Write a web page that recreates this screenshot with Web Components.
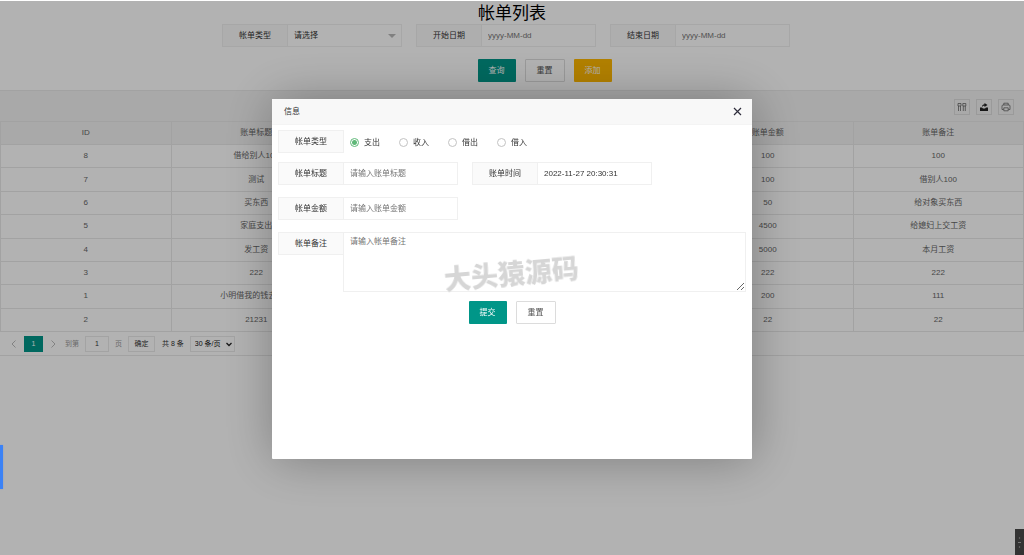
<!DOCTYPE html>
<html lang="zh">
<head>
<meta charset="utf-8">
<title>帐单列表</title>
<style>
html,body{margin:0;background:#fff;color:#333;font:8px/12px "Liberation Sans","Noto Sans CJK SC",sans-serif}
</style>
</head>
<body>
<bill-page></bill-page>
<modal-layer heading="信息"><bill-form></bill-form></modal-layer>
<side-handle></side-handle>
<corner-tool></corner-tool>
<script>
const base = `*{box-sizing:border-box}button,input,select,textarea{font:inherit;color:inherit;margin:0;border-radius:0}`;
function define(name, html) {
  customElements.define(name, class extends HTMLElement {
    connectedCallback() {
      if (this.shadowRoot) return;
      const root = this.attachShadow({mode: 'open'});
      root.innerHTML = typeof html === 'function' ? html(this) : html;
    }
  });
}

/* Label box joined to a text box, a drop-down or a text area */
define('form-field', el => {
  const kind = el.getAttribute('kind') || 'text';
  const hint = el.getAttribute('hint') || '';
  const control = {
    text: `<input id="c" type="text" placeholder="${hint}" value="${el.getAttribute('value') || ''}">`,
    select: `<select id="c"><option>${hint}</option></select><svg width="8" height="4" viewBox="0 0 8 4"><path d="M0 0h8L4 4z" fill="#b8b8b8"/></svg>`,
    area: `<textarea id="c" placeholder="${hint}"></textarea>`
  }[kind];
  return `<style>${base}
  :host{display:flex;width:180px;align-items:flex-start}
  :host([kind=area]){width:auto}
  label{flex:0 0 66px;height:23px;line-height:21px;text-align:center;border:1px solid #f0f0f0;background:#fafafa}
  .box{flex:1;display:flex;position:relative;margin-left:-1px}
  input,select,textarea{width:100%;height:23px;border:1px solid #f0f0f0;background:#fff;padding:0 6px;outline:0;appearance:none}
  textarea{height:60px;padding:3px 6px;resize:both;display:block}
  ::placeholder{color:#757575;opacity:1}
  svg{position:absolute;right:6px;top:10px;pointer-events:none}
  </style><label for="c">${el.getAttribute('label')}</label><div class="box">${control}</div>`;
});

define('ui-button', `<style>${base}
  :host{display:block}
  button{display:block;height:23px;padding:0 11px;border:0;border-radius:1px;background:#009688;color:#fff;line-height:21px}
  :host([tone=plain]) button{background:#fff;color:#555;border:1px solid #dcdcdc}
  :host([tone=warm]) button{background:#ffb800}
  </style><button type="button"><slot></slot></button>`);

define('search-bar', `<style>${base}
  :host{display:block}
  .fields{display:flex;justify-content:center;gap:14px;padding-right:12px}
  .actions{display:flex;justify-content:center;gap:9px;margin:12px 0 0 65px}
  </style>
  <div class="fields">
    <form-field kind="select" label="帐单类型" hint="请选择"></form-field>
    <form-field label="开始日期" hint="yyyy-MM-dd"></form-field>
    <form-field label="结束日期" hint="yyyy-MM-dd"></form-field>
  </div>
  <div class="actions"><ui-button>查询</ui-button><ui-button tone="plain">重置</ui-button><ui-button tone="warm">添加</ui-button></div>`);

define('table-tools', `<style>${base}
  :host{display:flex;justify-content:flex-end;align-items:center;gap:6px;height:31px;padding:2px 10px 0;background:#f2f2f2;border-top:1px solid #e8e8e8}
  button{width:16px;height:16px;padding:0;border:1px solid #ddd;background:none;display:grid;place-items:center;color:#555}
  svg{width:10px;height:10px;fill:none;stroke:currentColor}
  </style>
  <button aria-label="筛选列"><svg viewBox="0 0 10 10"><path d="M1 1.500h3v2.500H1zM5.800 1.500h3v2.500h-3zM1.500 4v5M3.500 4v5M6.300 4v5M8.300 4v5" stroke-width=".7"/></svg></button>
  <button aria-label="导出"><svg viewBox="0 0 10 10"><path d="M1 5.500h2L4 6.500h2l1-1h2V9H1z" fill="#222" stroke="none"/><path d="M3 5c0-2 1-2.800 2.500-2.800V1L8.500 3 5.500 5V3.800C4.200 3.800 3.800 4.200 3 5z" fill="#222" stroke="none"/></svg></button>
  <button aria-label="打印"><svg viewBox="0 0 10 10"><path d="M2.800 3V1.200h4.400V3M2.500 7.500H1V4q0-1 1-1h6q1 0 1 1v3.500H7.500M2.800 5.800h4.400v3H2.800z" stroke-width=".7"/></svg></button>`);

const rows = [
  ['8', '借给别人100', '100', '100'],
  ['7', '测试', '100', '借别人100'],
  ['6', '买东西', '50', '给对象买东西'],
  ['5', '家庭支出', '4500', '给媳妇上交工资'],
  ['4', '发工资', '5000', '本月工资'],
  ['3', '222', '222', '222'],
  ['1', '小明借我的钱去买菜', '200', '111'],
  ['2', '21231', '22', '22']
];
define('bill-table', `<style>${base}
  :host{display:block}
  table{width:100%;height:211px;table-layout:fixed;border-collapse:collapse;color:#666}
  th,td{height:23px;padding:0;text-align:center;font-weight:400;border:1px solid #e8e8e8}
  th{background:#f2f2f2}
  </style>
  <table><thead><tr><th>ID</th><th>账单标题</th><th></th><th></th><th>账单金额</th><th>账单备注</th></tr></thead>
  <tbody>${rows.map(r => `<tr><td>${r[0]}</td><td>${r[1]}</td><td></td><td></td><td>${r[2]}</td><td>${r[3]}</td></tr>`).join('')}</tbody></table>`);

define('page-nav', `<style>${base}
  :host{display:flex;align-items:center;height:24px;padding-left:9px;font-size:7px;border-bottom:1px solid #e8e8e8}
  button,input,select{height:16px;padding:0;border:1px solid #eaeaea;background:#fff;text-align:center}
  .arrow{border:0;width:8px;display:grid;place-items:center}
  .arrow svg{width:5px;height:8px;fill:none;stroke:#bbb}
  .now{width:19px;border:0;background:#009688;color:#fff;margin:0 6px 0 7px}
  label{display:flex;align-items:center;gap:6px;color:#999;margin-left:8px}
  input{width:24px;color:#333}
  .go{width:27px;margin:0 7px 0 6px}
  .size{position:relative;display:flex;margin-left:6px}
  select{appearance:none;width:45px;text-align:left;padding-left:4px;color:#111}
  .size svg{position:absolute;right:3px;top:6px;fill:none;stroke:#222;pointer-events:none}
  </style>
  <button class="arrow" aria-label="上一页"><svg viewBox="0 0 5 8"><path d="M4.500.5 1 4l3.500 3.500"/></svg></button>
  <button class="now">1</button>
  <button class="arrow" aria-label="下一页"><svg viewBox="0 0 5 8"><path d="M.5.5 4 4 .5 7.500"/></svg></button>
  <label>到第<input type="text" value="1">页</label>
  <button class="go">确定</button><span>共 8 条</span>
  <span class="size"><select aria-label="每页条数"><option>30 条/页</option></select><svg width="6" height="5" viewBox="0 0 6 5"><path d="m.5 1 2.500 2.500L5.500 1" stroke-width="1.300"/></svg></span>`);

define('bill-page', `<style>${base}
  :host{display:block;padding-top:4px}
  h1{margin:0;font-size:17px;line-height:20px;font-weight:400;text-align:center;color:#000}
  table-tools{margin-top:8px}
  </style>
  <h1>帐单列表</h1><search-bar></search-bar>
  <table-tools></table-tools><bill-table></bill-table><page-nav></page-nav>`);

/* Shade over the page with a dialog in the middle */
define('modal-layer', el => `<style>${base}
  :host{position:fixed;inset:1px 0 0;padding-top:2px;display:flex;align-items:center;justify-content:center;background:rgba(0,0,0,.3)}
  section{width:480px;max-width:96%;min-height:360px;background:#fff;border-radius:1px;box-shadow:1px 1px 50px rgba(0,0,0,.3)}
  header{display:flex;align-items:center;justify-content:space-between;height:26px;padding:0 10px 0 12px;background:#f8f8f8;border-bottom:1px solid #f4f4f4}
  h2{margin:0;font:inherit}
  button{border:0;background:none;padding:0;display:flex}
  svg{width:9px;height:9px;stroke:#2e2d3c;stroke-width:1.200}
  </style>
  <section role="dialog" aria-label="${el.getAttribute('heading')}">
    <header><h2>${el.getAttribute('heading')}</h2><button aria-label="关闭"><svg viewBox="0 0 9 9"><path d="m1 1 7 7M8 1 1 8"/></svg></button></header>
    <slot></slot>
  </section>`);

define('radio-row', `<style>${base}
  :host{display:flex;align-items:center;height:23px}
  .name{width:66px;height:23px;line-height:21px;text-align:center;border:1px solid #f0f0f0;background:#fafafa;margin-right:6px}
  label{display:flex;align-items:center;gap:5px;width:49px;padding-top:2px}
  input{appearance:none;width:9px;height:9px;border:1px solid #c2c2c2;border-radius:50%;background:#fff}
  input:checked{border-color:#5fb878;background:radial-gradient(#5fb878 0 2px,#fff 3px)}
  </style>
  <span class="name">帐单类型</span>
  ${['支出', '收入', '借出', '借入'].map((t, i) => `<label><input type="radio" name="kind"${i ? '' : ' checked'}>${t}</label>`).join('')}`);

define('bill-form', `<style>${base}
  :host{display:block;padding:5px 6px}
  radio-row{margin-bottom:9px}
  .line{display:flex;gap:14px;margin-bottom:12px}
  .note{position:relative}
  .mark{position:absolute;left:166px;top:23px;font-size:27px;line-height:40px;font-weight:900;color:#d6d6d6;transform:rotate(-5deg);pointer-events:none;white-space:nowrap}
  .actions{display:flex;justify-content:center;gap:9px;margin-top:9px}
  </style>
  <radio-row></radio-row>
  <div class="line"><form-field label="帐单标题" hint="请输入账单标题"></form-field><form-field label="账单时间" value="2022-11-27 20:30:31"></form-field></div>
  <div class="line"><form-field label="帐单金额" hint="请输入账单金额"></form-field></div>
  <div class="note"><form-field kind="area" label="帐单备注" hint="请输入帐单备注"></form-field><span class="mark">大头猿源码</span></div>
  <div class="actions"><ui-button>提交</ui-button><ui-button tone="plain">重置</ui-button></div>`);

define('side-handle', `<style>:host{position:fixed;left:0;top:445px;width:3px;height:44px;background:#3b82f6;box-shadow:0 0 2px #8a9bb8}</style>`);
define('corner-tool', `<style>:host{position:fixed;right:0;bottom:0;width:9px;height:26px;background:#333;display:grid;place-items:center}svg{display:block}</style>
<svg width="5" height="18" viewBox="0 0 5 18" fill="#777"><circle cx="2.500" cy="5" r=".7"/><path d="M1 9h3v1H1z"/><circle cx="2.500" cy="14" r=".7"/></svg>`);
</script>
</body>
</html>
